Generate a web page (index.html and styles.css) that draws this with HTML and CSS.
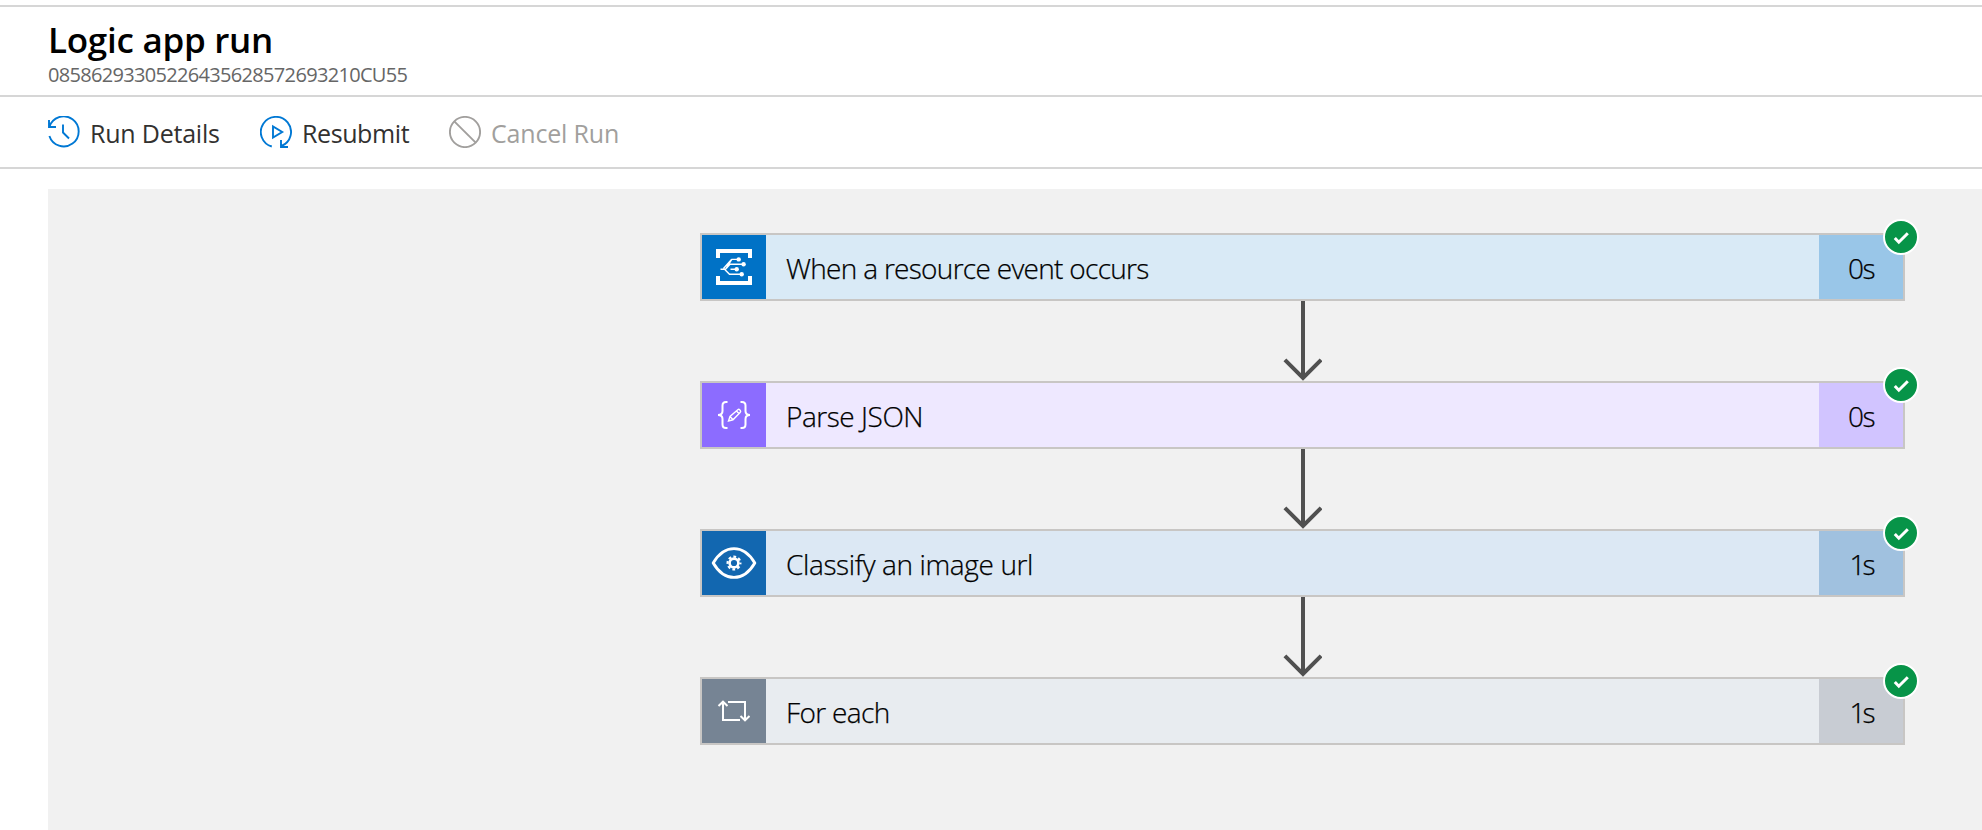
FILE: index.html
```html
<!DOCTYPE html>
<html lang="en">
<head>
<meta charset="utf-8">
<title>Logic app run</title>
<link rel="stylesheet" href="styles.css">
</head>
<body>
<header class="header">
  <h1 class="title">Logic app run</h1>
  <div class="run-id">08586293305226435628572693210CU55</div>
</header>
<nav class="toolbar">
  <button class="command details">
    <svg class="command-icon" width="32" height="32" viewBox="0 0 32 32"><path d="M1.4 10.8A15 15 0 1 1 1.4 20M1 4v7h7M15 8.500v8l6 6"/></svg>
    <span>Run Details</span>
  </button>
  <button class="command resubmit">
    <svg class="command-icon" width="32" height="32" viewBox="0 0 32 32"><path d="M11.800 30.500A15.100 15.100 0 1 1 21.500 30M21 24v7h7M13 10.500v11l9.200-5.500z"/></svg>
    <span>Resubmit</span>
  </button>
  <button class="command cancel" disabled>
    <svg class="command-icon" width="32" height="32" viewBox="0 0 32 32"><circle cx="16" cy="16" r="15.100"/><path d="M5.300 5.300l21.400 21.400"/></svg>
    <span>Cancel Run</span>
  </button>
</nav>
<main class="canvas">
  <section class="card event">
    <div class="tile"><svg width="64" height="64" viewBox="0 0 64 64"><path fill="#fff" d="M14 14h36v9h-4v-5H18v5h-4zM14 50h36v-9h-4v5H18v-5h-4z"/><g fill="none" stroke="#fff" stroke-width="1.400"><path d="M18.500 34.300h5l6.300-9.900h7M21.500 33.500l8-9.100M23.500 34.300l4.500-5h13M28.500 34.300h6M22.500 34.300l5 4.900h12"/></g><g fill="#fff"><circle cx="36.700" cy="24.400" r="2.200"/><circle cx="41.600" cy="29.200" r="2.200"/><circle cx="34.700" cy="34.300" r="2.200"/><circle cx="39.700" cy="39.200" r="2.200"/></g></svg></div>
    <div class="name event-name">When a resource event occurs</div>
    <div class="time">0s</div>
    <svg class="badge" width="36" height="36" viewBox="0 0 36 36"><circle cx="18" cy="18" r="17" /><path d="M11.800 19l4 4.200 9-9"/></svg>
  </section>
  <svg class="arrow" width="39" height="80" viewBox="0 0 39 80"><path d="M20 0v75M1.900 58.900L20 77 38.100 58.900"/></svg>
  <section class="card json">
    <div class="tile"><svg width="64" height="64" viewBox="0 0 64 64"><g fill="none" stroke="#fff" stroke-width="2"><path d="M25.500 19h-1.500q-3.500 0-3.500 3.500v5.500q0 4-4.500 4 4.500 0 4.500 4v5.500q0 3.500 3.500 3.500h1.500M38.500 19h1.500q3.500 0 3.500 3.500v5.500q0 4 4.500 4-4.500 0-4.500 4v5.500q0 3.500-3.500 3.500h-1.500"/><path stroke-width="1.400" d="M26.500 38l1.500-4.500 7.800-6.800q1-.8 2 .2l.5.600q.8 1-.2 2L31 36.800zM28 33.500l3 3.300M34.500 28l2.400 2.500"/></g></svg></div>
    <div class="name json-name">Parse JSON</div>
    <div class="time">0s</div>
    <svg class="badge" width="36" height="36" viewBox="0 0 36 36"><circle cx="18" cy="18" r="17" /><path d="M11.800 19l4 4.200 9-9"/></svg>
  </section>
  <svg class="arrow" width="39" height="80" viewBox="0 0 39 80"><path d="M20 0v75M1.900 58.900L20 77 38.100 58.900"/></svg>
  <section class="card vision">
    <div class="tile"><svg width="64" height="64" viewBox="0 0 64 64"><g fill="none" stroke="#fff"><path stroke-width="2.900" stroke-linejoin="round" d="M11.200 32C17 22 25 17.600 32 17.600S47 22 52.800 32C47 42 39 46.400 32 46.400S17 42 11.200 32z"/><circle cx="32" cy="32" r="4.400" stroke-width="2.600"/><circle cx="32" cy="32" r="6.400" stroke-width="2.200" stroke-dasharray="2.800 2.227" stroke-dashoffset="1.400"/></g></svg></div>
    <div class="name vision-name">Classify an image url</div>
    <div class="time narrow">1s</div>
    <svg class="badge" width="36" height="36" viewBox="0 0 36 36"><circle cx="18" cy="18" r="17" /><path d="M11.800 19l4 4.200 9-9"/></svg>
  </section>
  <svg class="arrow" width="39" height="80" viewBox="0 0 39 80"><path d="M20 0v75M1.900 58.900L20 77 38.100 58.900"/></svg>
  <section class="card loop">
    <div class="tile"><svg width="64" height="64" viewBox="0 0 64 64"><g fill="none" stroke="#fff" stroke-width="2"><path d="M26 23h17v18M38 41H21V23M16.500 27l4.500-4.300 4.500 4.300M38.500 37l4.500 4.300 4.500-4.300"/></g></svg></div>
    <div class="name loop-name">For each</div>
    <div class="time narrow">1s</div>
    <svg class="badge" width="36" height="36" viewBox="0 0 36 36"><circle cx="18" cy="18" r="17" /><path d="M11.800 19l4 4.200 9-9"/></svg>
  </section>
</main>
</body>
</html>
```
FILE: styles.css
```css
* { box-sizing: border-box; }
body {
  margin: 0;
  padding-top: 5px;
  height: 830px;
  overflow: hidden;
  display: flex;
  flex-direction: column;
  background: #fff;
  font-family: "Open Sans", "Noto Sans", sans-serif;
}
.header {
  height: 90px;
  flex: none;
  padding: 12px 0 0 48px;
  border-top: 2px solid #d6d6d6;
}
.title {
  margin: 0;
  font-size: 35px;
  line-height: 42px;
  font-weight: 600;
  letter-spacing: -0.27px;
  color: #000;
}
.run-id {
  font-size: 20px;
  line-height: 27px;
  letter-spacing: -0.68px;
  color: #666;
}
.toolbar {
  height: 74px;
  flex: none;
  display: flex;
  align-items: flex-start;
  padding: 19px 0 0 48px;
  border-top: 2px solid #d6d6d6;
  border-bottom: 2px solid #d6d6d6;
}
.command {
  display: flex;
  gap: 10px;
  margin: 0;
  padding: 0;
  border: 0;
  background: none;
  font: 25px/34px "Open Sans", "Noto Sans", sans-serif;
  color: #323130;
  white-space: nowrap;
}
.details { width: 212px; letter-spacing: -0.22px; }
.resubmit { width: 189px; letter-spacing: -0.4px; }
.cancel { color: #a19f9d; letter-spacing: -0.18px; }
.command-icon {
  flex: none;
  fill: none;
  stroke: #0078d4;
  stroke-width: 1.9;
}
.cancel .command-icon { stroke: #a19f9d; }
.canvas {
  flex: 1;
  margin: 20px 0 0 48px;
  padding: 44px 77px 0 652px;
  display: flex;
  flex-direction: column;
  align-items: center;
  background: #f1f1f1;
}
.card {
  position: relative;
  flex: none;
  display: flex;
  width: 1205px;
  height: 68px;
  border: 2px solid #c8c6c4;
}
.tile { flex: none; width: 64px; height: 64px; }
.tile svg { display: block; }
.name,
.time {
  font-size: 28px;
  line-height: 67px;
  font-weight: 300;
  color: #000;
  -webkit-text-stroke: 0.25px #000;
}
.name {
  flex: 1;
  padding-left: 20px;
  white-space: nowrap;
}
.event-name { letter-spacing: -0.7px; }
.json-name { letter-spacing: -0.45px; }
.vision-name { letter-spacing: -0.38px; }
.loop-name { letter-spacing: -0.65px; }
.time {
  flex: none;
  width: 84px;
  text-align: center;
  letter-spacing: -1.5px;
}
.narrow { letter-spacing: -3px; }
.event { background: #d9eaf6; }
.event .tile { background: #0072c6; }
.event .time { background: #99c6e8; }
.json { background: #eee8ff; }
.json .tile { background: #8c6cff; }
.json .time { background: #d1c4ff; }
.vision { background: #dce8f4; }
.vision .tile { background: #1267b0; }
.vision .time { background: #a0c1df; }
.loop { background: #e8ecf0; }
.loop .tile { background: #768494; }
.loop .time { background: #c8ccd3; }
.badge {
  position: absolute;
  top: -16px;
  right: -16px;
}
.badge circle { fill: #079448; stroke: #fff; stroke-width: 2; }
.badge path { fill: none; stroke: #fff; stroke-width: 3; }
.arrow {
  flex: none;
  fill: none;
  stroke: #505050;
  stroke-width: 4;
}
```
